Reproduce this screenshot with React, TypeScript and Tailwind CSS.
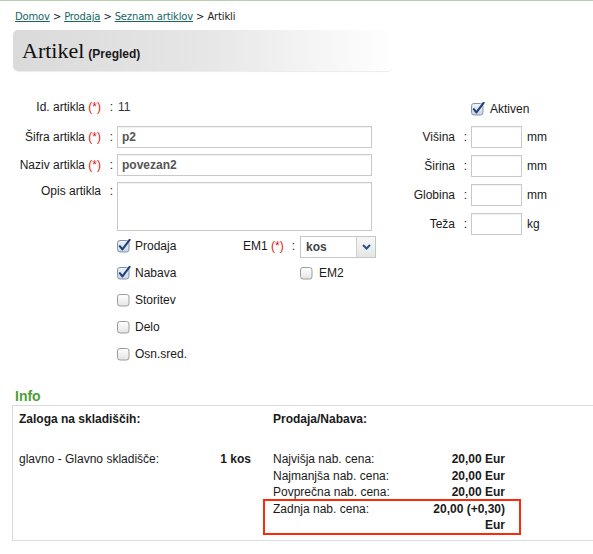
import React from "react";

function Box({ checked = false }: { checked?: boolean }) {
  return (
    <svg width="14" height="14" viewBox="0 0 14 14" className="shrink-0" aria-hidden="true">
      <defs>
        <linearGradient id={checked ? "cbOn" : "cbOff"} x1="0" y1="0" x2="0" y2="1">
          <stop offset="0" stopColor={checked ? "#eef3fa" : "#ffffff"} />
          <stop offset="1" stopColor={checked ? "#c9d6e6" : "#e4e4e4"} />
        </linearGradient>
      </defs>
      <rect
        x="0.5"
        y="1.5"
        width="11.5"
        height="11.5"
        rx="2.5"
        fill={`url(#${checked ? "cbOn" : "cbOff"})`}
        stroke={checked ? "#8593a8" : "#9c9c9c"}
      />
      {checked && (
        <path d="M2.8 7.2 L5.4 10.4 L12.6 0.8" fill="none" stroke="#23407a" strokeWidth="2.1" strokeLinecap="round" strokeLinejoin="round" />
      )}
    </svg>
  );
}

function Check({ label, checked }: { label: string; checked?: boolean }) {
  return (
    <div className="flex h-[27px] items-center gap-[4px]">
      <Box checked={checked} />
      <span>{label}</span>
    </div>
  );
}

function Label({ text, req, w }: { text: string; req?: boolean; w: string }) {
  return (
    <div className={`flex shrink-0 justify-end ${w}`}>
      <span>
        {text}
        {req && <span className="text-[#e8160c]"> (*)</span>}
      </span>
      <span className="w-[12px] text-right">:</span>
    </div>
  );
}

function Dim({ label, unit }: { label: string; unit: string }) {
  return (
    <div className="flex h-[22px] items-center">
      <Label text={label} w="w-[87px]" />
      <div className="ml-[4px] h-[22px] w-[51px] border border-[#c9c9c9] bg-white shadow-[inset_0_1px_1px_rgba(0,0,0,0.06)]" />
      <span className="ml-[5px]">{unit}</span>
    </div>
  );
}

const prices = [
  ["Najvišja nab. cena:", "20,00 Eur"],
  ["Najmanjša nab. cena:", "20,00 Eur"],
  ["Povprečna nab. cena:", "20,00 Eur"],
];

export default function App() {
  return (
    <div className="min-h-[554px] w-[593px] overflow-hidden bg-white font-['Liberation_Sans',Arial,sans-serif] text-[12px] leading-[16px] text-[#1a1a1a]">
      <div className="h-px bg-[#b8cfb2]" />

      {/* Breadcrumb */}
      <div className="mt-[9px] h-[14px] pl-[15px] font-['DejaVu_Sans',Verdana,sans-serif] text-[10px] leading-[14px] tracking-[-0.15px]">
        <a className="text-[#16675f] underline">Domov</a> &gt; <a className="text-[#16675f] underline">Prodaja</a> &gt;{" "}
        <a className="text-[#16675f] underline">Seznam artiklov</a> &gt; <span className="text-[#222]">Artikli</span>
      </div>

      {/* Title */}
      <div className="ml-[13px] mt-[6px] flex h-[41px] w-[380px] items-center rounded-[5px] bg-gradient-to-r from-[#dadada] via-[#e6e6e6] to-white pl-[9px] shadow-[0_1px_1px_rgba(0,0,0,0.08)]">
        <div className="flex items-baseline gap-[4px]">
          <span className="font-['Liberation_Serif','Times_New_Roman',serif] text-[22px] leading-[24px] text-[#111]">Artikel</span>
          <span className="text-[12px] font-bold">(Pregled)</span>
        </div>
      </div>

      {/* Form */}
      <div className="mt-[25px] flex">
        <div className="w-[380px] shrink-0">
          <div className="flex h-[22px] items-center">
            <Label text="Id. artikla" req w="w-[113px]" />
            <span className="ml-[5px] text-[#333]">11</span>
          </div>
          <div className="mt-[8px] flex h-[22px] items-center">
            <Label text="Šifra artikla" req w="w-[113px]" />
            <div className="ml-[4px] flex h-[22px] w-[255px] items-center border border-[#c9c9c9] px-[4px] font-bold text-[#555] shadow-[inset_0_1px_1px_rgba(0,0,0,0.06)]">p2</div>
          </div>
          <div className="mt-[6px] flex h-[22px] items-center">
            <Label text="Naziv artikla" req w="w-[113px]" />
            <div className="ml-[4px] flex h-[22px] w-[255px] items-center border border-[#c9c9c9] px-[4px] font-bold text-[#555] shadow-[inset_0_1px_1px_rgba(0,0,0,0.06)]">povezan2</div>
          </div>
          <div className="mt-[6px] flex items-start">
            <div className="pt-[1px]">
              <Label text="Opis artikla" w="w-[113px]" />
            </div>
            <div className="ml-[4px] h-[49px] w-[255px] border border-[#c9c9c9] shadow-[inset_0_1px_1px_rgba(0,0,0,0.06)]" />
          </div>

          <div className="ml-[117px] mt-[1px] flex">
            <div className="w-[126px] shrink-0">
              <Check label="Prodaja" checked />
              <Check label="Nabava" checked />
              <Check label="Storitev" />
              <Check label="Delo" />
              <Check label="Osn.sred." />
            </div>
            <div>
              <div className="flex h-[27px] items-center">
                <span>
                  EM1 <span className="text-[#e8160c]">(*)</span>
                </span>
                <span className="ml-[8px]">:</span>
                <div className="ml-[5px] mt-[2px] flex h-[22px] w-[76px] items-stretch border border-[#c6c6c6] border-r-[#a9d6b8] bg-white">
                  <span className="flex flex-1 items-center pl-[5px] font-bold text-[#444]">kos</span>
                  <span className="flex w-[19px] items-center justify-center border-l border-[#cfcfcf] bg-gradient-to-b from-[#f7f7f7] to-[#e6e6e6]">
                    <svg width="9" height="6" viewBox="0 0 9 6" aria-hidden="true">
                      <path d="M1 1 L4.5 4.5 L8 1" fill="none" stroke="#2b4f8a" strokeWidth="2" />
                    </svg>
                  </span>
                </div>
              </div>
              <div className="flex h-[27px] items-center pl-[57px]">
                <div className="flex items-center gap-[5px]">
                  <Box />
                  <span>EM2</span>
                </div>
              </div>
            </div>
          </div>
        </div>

        <div className="mt-[2px]">
          <div className="flex h-[22px] items-center gap-[5px] pl-[91px]">
            <Box checked />
            <span>Aktiven</span>
          </div>
          <div className="mt-[6px] flex flex-col gap-[7px]">
            <Dim label="Višina" unit="mm" />
            <Dim label="Širina" unit="mm" />
            <Dim label="Globina" unit="mm" />
            <Dim label="Teža" unit="kg" />
          </div>
        </div>
      </div>

      {/* Info */}
      <div className="mt-[21px] pl-[15px] text-[14px] font-bold leading-[16px] text-[#4f9d36]">Info</div>
      <div className="ml-[12px] mt-px w-[620px] border border-[#dcdcdc] pb-[6px] pl-[6px] pt-[5px]">
        <div className="flex">
          <div className="w-[232px] shrink-0">
            <div className="font-bold">Zaloga na skladiščih:</div>
            <div className="mt-[24px] flex justify-between">
              <span>glavno - Glavno skladišče:</span>
              <span className="font-bold">1 kos</span>
            </div>
          </div>
          <div className="ml-[22px] w-[232px] shrink-0">
            <div className="font-bold">Prodaja/Nabava:</div>
            <div className="mt-[24px] leading-[16.5px]">
              {prices.map(([l, v]) => (
                <div key={l} className="flex justify-between">
                  <span>{l}</span>
                  <span className="w-[80px] text-right font-bold">{v}</span>
                </div>
              ))}
              <div className="relative flex justify-between">
                <span>Zadnja nab. cena:</span>
                <span className="w-[80px] text-right font-bold">20,00 (+0,30) Eur</span>
                <div className="pointer-events-none absolute -bottom-[1px] -left-[10px] -right-[16px] -top-[2px] border-2 border-[#fb2a0b]" />
              </div>
            </div>
          </div>
        </div>
      </div>
    </div>
  );
}
